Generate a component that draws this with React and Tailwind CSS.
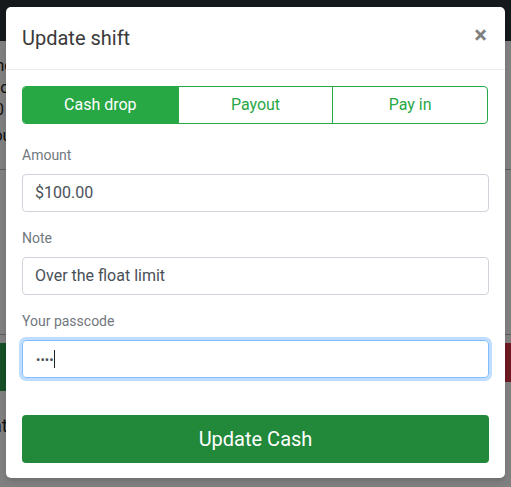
function Field({ label, children, className = '' }) {
  return (
    <div className={className}>
      <div className="pt-[3px]">
        <label className="block text-[14px] leading-[22px] text-[#72787e] mb-2">{label}</label>
      </div>
      {children}
    </div>
  )
}

function Backdrop() {
  // page behind the modal, mostly hidden
  return (
    <div className="absolute inset-0 bg-white overflow-hidden">
      <div className="h-[41px] bg-[#2c3237]" />
      <div className="h-[128px] text-[#222] text-[16px] leading-[22px] pt-[14px]">
        <div className="-ml-[14px]">Shop</div>
        <div className="-ml-[14px]">Cloc</div>
        <div className="-ml-[14px]">10</div>
        <div className="-ml-[18px] mt-[4px]">Hour</div>
      </div>
      <div className="border-t border-[#bbb]" />
      <div className="h-[164px]" />
      <div className="border-t border-[#bbb]" />
      <div className="mt-[8px] flex justify-between items-start">
        <div className="w-[40px] h-[48px] bg-[#2a9d4f]" />
        <div className="w-[40px] h-[39px] bg-[#dc3545]" />
      </div>
      <div className="text-[#222] text-[18px] leading-[22px] -ml-[8px] mt-[24px]">at</div>
    </div>
  )
}

export default function App() {
  return (
    <div className="relative w-[511px] h-[487px] overflow-hidden" style={{ fontFamily: 'Roboto, "Liberation Sans", sans-serif' }}>
      <Backdrop />
      <div className="absolute inset-0 bg-black/50" />

      {/* Modal */}
      <div className="absolute inset-0 px-[6px] pt-[7px]">
        <div className="bg-white rounded-[5px] shadow-md">
          <div className="flex items-center justify-between px-4 h-[63px] border-b border-[#e9ecef]">
            <h5 className="text-[20px] leading-[30px] text-[#3a3a3a] font-normal">Update shift</h5>
            <button className="text-[24px] font-bold leading-none text-black/50 -mt-[6px] mr-[2px]">×</button>
          </div>

          <div className="p-4">
            <div className="grid grid-cols-3 border border-[#28a745] rounded-[4px] overflow-hidden h-[38px] mb-[17px] mr-[1px]">
              <button className="bg-[#28a745] text-white text-[16px]">Cash drop</button>
              <button className="text-[#28a745] text-[16px] border-l border-[#28a745]">Payout</button>
              <button className="text-[#28a745] text-[16px] border-l border-[#28a745]">Pay in</button>
            </div>

            <Field label="Amount">
              <div className="h-[38px] border border-[#ced4da] rounded-[4px] px-3 flex items-center text-[16px] text-[#495057]">
                $100.00
              </div>
            </Field>

            <Field label="Note" className="mt-[12px]">
              <div className="h-[38px] border border-[#ced4da] rounded-[4px] px-3 flex items-center text-[16px] text-[#495057]">
                Over the float limit
              </div>
            </Field>

            <Field label="Your passcode" className="mt-[12px]">
              <div className="h-[38px] border border-[#80bdff] rounded-[4px] px-3 flex items-center text-[#495057] shadow-[0_0_0_3px_rgba(0,123,255,0.25)]">
                <span className="text-[13px] leading-none pl-[1px]">••••</span>
                <span className="w-px h-[18px] bg-[#222]" />
              </div>
            </Field>

            <button className="mt-[37px] w-full h-[48px] bg-[#22883a] text-white text-[20px] rounded-[4px] mb-[-1px]">
              Update Cash
            </button>
          </div>
        </div>
      </div>
    </div>
  )
}
